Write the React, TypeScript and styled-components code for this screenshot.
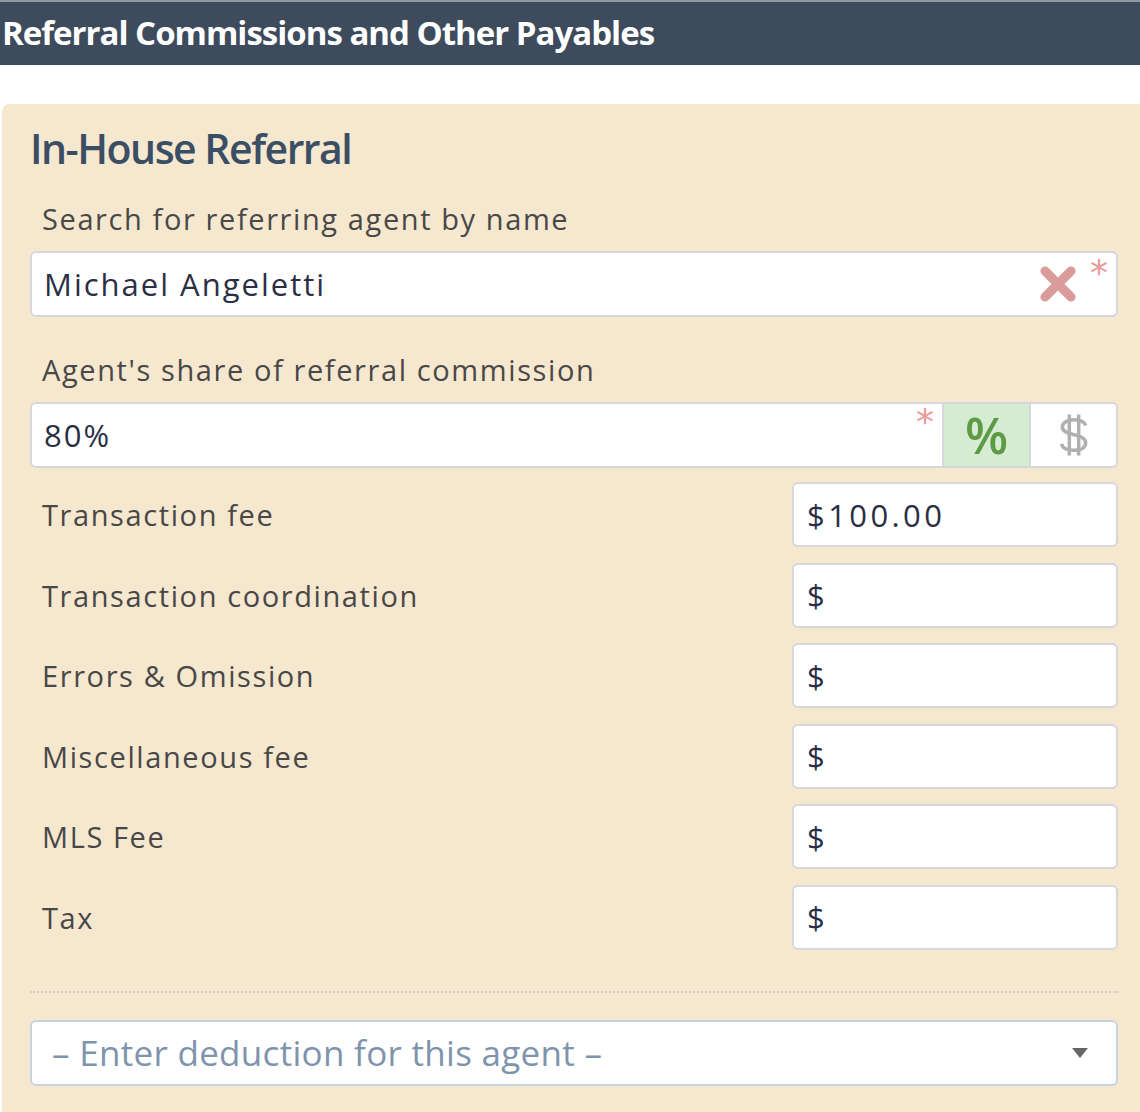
import styled, { createGlobalStyle } from 'styled-components'

const GlobalStyle = createGlobalStyle`
  html, body {
    margin: 0;
    padding: 0;
    background: #ffffff;
  }
  * { box-sizing: border-box; }
`

const fees = [
  { label: 'Transaction fee', value: '$100.00' },
  { label: 'Transaction coordination', value: '$' },
  { label: 'Errors & Omission', value: '$' },
  { label: 'Miscellaneous fee', value: '$' },
  { label: 'MLS Fee', value: '$' },
  { label: 'Tax', value: '$' },
]

export default function App() {
  return (
    <Page>
      <GlobalStyle />
      <HeaderBar>
        <HeaderTitle>Referral Commissions and Other Payables</HeaderTitle>
      </HeaderBar>
      <Panel>
        <PanelTitle>In-House Referral</PanelTitle>

        <Label>Search for referring agent by name</Label>
        <Field $mb={36}>
          <FieldText $spacing={2}>Michael Angeletti</FieldText>
          <ClearIcon viewBox="0 0 20 20">
            <path d="M3.5 3.5 L16.5 16.5 M16.5 3.5 L3.5 16.5" stroke="#d99c9b" strokeWidth="4.6" strokeLinecap="round" />
          </ClearIcon>
          <Required $top={2}>*</Required>
        </Field>

        <Label>Agent's share of referral commission</Label>
        <Field $noPad $mb={14}>
          <FieldText $pad $spacing={2}>80%</FieldText>
          <Required $top={0} $static>*</Required>
          <Toggle $active>%</Toggle>
          <Toggle>
            <DollarIcon viewBox="0 0 26 30">
              <path
                d="M21 8.5 C20 5.5 17 4.5 13 4.5 C8.5 4.5 5 6.5 5 9.5 C5 16 21 13.5 21 20.5 C21 24 17 25.5 13 25.5 C8.5 25.5 5 24 4.5 21"
                fill="none"
                stroke="#b0b0b0"
                strokeWidth="2.4"
              />
              <path d="M9.8 1 V29 M16.2 1 V29" stroke="#b0b0b0" strokeWidth="2.4" />
            </DollarIcon>
          </Toggle>
        </Field>

        <FeeList>
          {fees.map(fee => (
            <FeeRow key={fee.label}>
              <FeeLabel>{fee.label}</FeeLabel>
              <FeeInput>{fee.value}</FeeInput>
            </FeeRow>
          ))}
        </FeeList>

        <Divider />

        <Select>
          <Placeholder>– Enter deduction for this agent –</Placeholder>
          <Caret />
        </Select>
      </Panel>
    </Page>
  )
}

const Page = styled.div`
  width: 1140px;
  height: 1112px;
  overflow: hidden;
  background: #ffffff;
`

const HeaderBar = styled.div`
  height: 65px;
  background: #3d4b5c;
  border-top: 2px solid #8e99a5;
  display: flex;
  align-items: center;
  padding-left: 2px;
`

const HeaderTitle = styled.div`
  font-family: 'Open Sans', 'Liberation Sans', sans-serif;
  font-weight: 700;
  font-size: 33px;
  color: #ffffff;
  letter-spacing: -1px;
  margin-top: -2px;
`

const Panel = styled.div`
  margin: 39px 0 0 2px;
  height: 1010px;
  background: #f6e7cf;
  border-radius: 8px 0 0 0;
  padding: 22px 22px 0 28px;
`

const PanelTitle = styled.div`
  font-family: 'Open Sans', 'Liberation Sans', sans-serif;
  font-weight: 600;
  font-size: 41px;
  letter-spacing: -1.5px;
  color: #3a4e64;
  line-height: 44px;
  margin-bottom: 32px;
`

const Label = styled.div`
  font-family: 'Open Sans', 'DejaVu Sans', sans-serif;
  font-size: 29px;
  letter-spacing: 1.6px;
  color: #484848;
  line-height: 34px;
  padding-left: 12px;
  margin-bottom: 15px;
`

const Field = styled.div<{ $noPad?: boolean; $mb: number }>`
  height: 66px;
  background: #ffffff;
  border: 2px solid #d4d8dd;
  border-radius: 6px;
  display: flex;
  align-items: center;
  padding: ${({ $noPad }) => ($noPad ? '0' : '0 0 0 12px')};
  margin-bottom: ${({ $mb }) => $mb}px;
  position: relative;
  overflow: hidden;
`

const FieldText = styled.div<{ $pad?: boolean; $spacing: number }>`
  flex: 1;
  font-family: 'Open Sans', 'DejaVu Sans', sans-serif;
  font-size: 31px;
  letter-spacing: ${({ $spacing }) => $spacing}px;
  color: #2b2f45;
  padding-left: ${({ $pad }) => ($pad ? '12px' : '0')};
`

const ClearIcon = styled.svg`
  width: 40px;
  height: 40px;
  margin-right: 38px;
`

const Required = styled.span<{ $top: number; $static?: boolean }>`
  position: ${({ $static }) => ($static ? 'relative' : 'absolute')};
  top: ${({ $top }) => $top}px;
  right: ${({ $static }) => ($static ? '0' : '8px')};
  align-self: ${({ $static }) => ($static ? 'flex-start' : 'auto')};
  margin-right: ${({ $static }) => ($static ? '8px' : '0')};
  font-family: 'DejaVu Sans', sans-serif;
  font-size: 36px;
  line-height: 36px;
  color: #ec9a9a;
`

const Toggle = styled.div<{ $active?: boolean }>`
  width: 87px;
  height: 100%;
  display: flex;
  align-items: center;
  justify-content: center;
  border-left: 2px solid #d4d8dd;
  background: ${({ $active }) => ($active ? '#d5ecd2' : '#ffffff')};
  color: #5c9a46;
  font-family: 'Open Sans', 'DejaVu Sans', sans-serif;
  font-weight: 600;
  font-size: 50px;
  line-height: 1;
`

const DollarIcon = styled.svg`
  width: 38px;
  height: 44px;
`

const FeeList = styled.div`
  display: flex;
  flex-direction: column;
  gap: 15.6px;
`

const FeeRow = styled.div`
  display: flex;
  align-items: center;
  justify-content: space-between;
  height: 65px;
`

const FeeLabel = styled.div`
  font-family: 'Open Sans', 'DejaVu Sans', sans-serif;
  font-size: 29px;
  letter-spacing: 1.6px;
  color: #484848;
  padding-left: 12px;
`

const FeeInput = styled.div`
  width: 326px;
  height: 65px;
  background: #ffffff;
  border: 2px solid #d4d8dd;
  border-radius: 6px;
  display: flex;
  align-items: center;
  padding-left: 13px;
  font-family: 'Open Sans', 'DejaVu Sans', sans-serif;
  font-size: 31px;
  letter-spacing: 3.4px;
  color: #2b2f45;
`

const Divider = styled.div`
  margin-top: 41px;
  border-top: 2px dotted #d9ccb8;
`

const Select = styled.div`
  margin-top: 27px;
  height: 66px;
  background: #ffffff;
  border: 2px solid #c9d3de;
  border-radius: 6px;
  display: flex;
  align-items: center;
  justify-content: space-between;
  padding: 0 28px 0 20px;
`

const Placeholder = styled.div`
  font-family: 'Open Sans', 'Liberation Sans', sans-serif;
  font-size: 35px;
  letter-spacing: 0.3px;
  color: #7e94ad;
`

const Caret = styled.div`
  width: 0;
  height: 0;
  border-left: 8px solid transparent;
  border-right: 8px solid transparent;
  border-top: 10px solid #666666;
`
